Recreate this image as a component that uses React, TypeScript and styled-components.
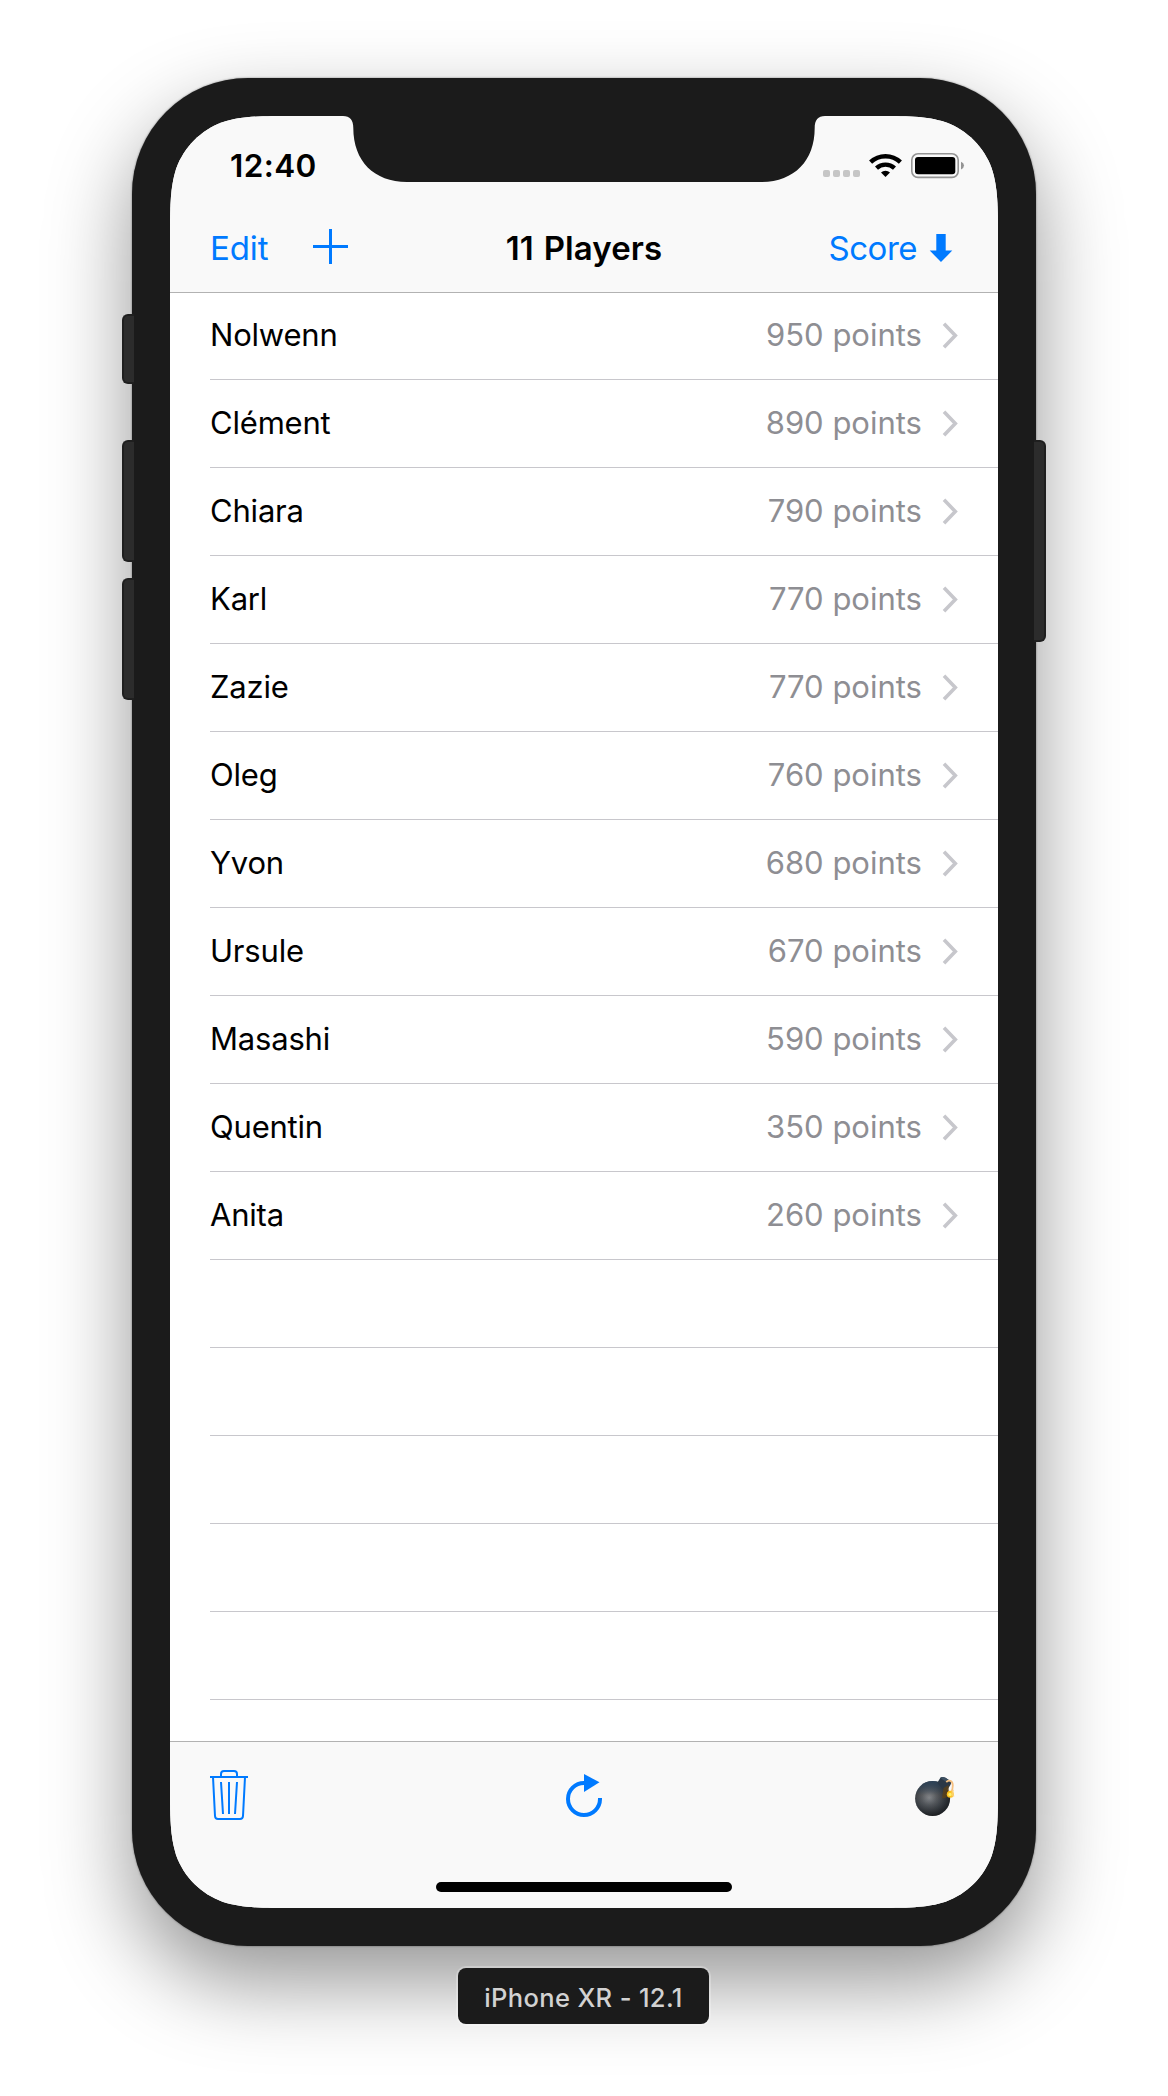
import React from "react";
import styled, { createGlobalStyle } from "styled-components";

const BLUE = "#007aff";

const GlobalStyle = createGlobalStyle`
  * { box-sizing: border-box; }
  html, body { margin: 0; background: #fff; }
  body { font-family: Inter, "Liberation Sans", sans-serif; }
`;

/* Continuous-curvature rounded rectangle, as used by the display mask. */
const smoothRect = (w: number, h: number, r: number) => {
  const a = 1.52866483 * r;
  const b = 1.08849296 * r;
  const c = 0.86840694 * r;
  const d = 0.63149379 * r;
  const e = 0.37282383 * r;
  const f = 0.16905956 * r;
  const g = 0.07491139 * r;
  return (
    `M${a} 0 L${w - a} 0 C${w - b} 0 ${w - c} 0 ${w - d} ${g} C${w - e} ${f} ${w - f} ${e} ${w - g} ${d} C${w} ${c} ${w} ${b} ${w} ${a} ` +
    `L${w} ${h - a} C${w} ${h - b} ${w} ${h - c} ${w - g} ${h - d} C${w - f} ${h - e} ${w - e} ${h - f} ${w - d} ${h - g} C${w - c} ${h} ${w - b} ${h} ${w - a} ${h} ` +
    `L${a} ${h} C${b} ${h} ${c} ${h} ${d} ${h - g} C${e} ${h - f} ${f} ${h - e} ${g} ${h - d} C0 ${h - c} 0 ${h - b} 0 ${h - a} ` +
    `L0 ${a} C0 ${b} 0 ${c} ${g} ${d} C${f} ${e} ${e} ${f} ${d} ${g} C${c} 0 ${b} 0 ${a} 0 Z`
  );
};

const Desktop = styled.main`
  display: flex;
  flex-direction: column;
  align-items: center;
  gap: 22px;
  height: 2096px;
  padding-top: 78px;
  overflow: hidden;
  background: #fff;
`;

const Device = styled.div`
  position: relative;
  flex: none;
  width: 904px;
  height: 1868px;
  padding: 38px;
  border-radius: 116px;
  background: #1b1b1b;
  box-shadow: 0 0 2px rgba(0, 0, 0, 0.5), 0 36px 84px rgba(0, 0, 0, 0.42);
`;

const SideButton = styled.span<{ $side: "left" | "right"; $top: number; $height: number }>`
  position: absolute;
  ${(p) => p.$side}: -10px;
  top: ${(p) => p.$top}px;
  width: 12px;
  height: ${(p) => p.$height}px;
  background: #2c2c2c;
  border: 2px solid #1f1f1f;
  border-${(p) => (p.$side === "left" ? "right" : "left")}-width: 0;
  border-radius: ${(p) => (p.$side === "left" ? "6px 0 0 6px" : "0 6px 6px 0")};
`;

const Screen = styled.div`
  position: relative;
  display: flex;
  flex-direction: column;
  width: 828px;
  height: 1792px;
  background: #fff;
  clip-path: path("${smoothRect(828, 1792, 83)}");
`;

const Notch = styled.svg`
  position: absolute;
  top: 0;
  left: 173px;
`;

const Header = styled.header`
  flex: none;
  height: 177px;
  background: #f9f9f9;
  border-bottom: 1px solid #b2b2b2;
`;

const StatusBar = styled.div`
  display: flex;
  justify-content: space-between;
  height: 88px;
  padding: 37px 33px 0 60px;
`;

const Clock = styled.time`
  margin-top: -6px;
  line-height: 37px;
  font-size: 31.5px;
  font-weight: 600;
  letter-spacing: 0.4px;
`;

const StatusIcons = styled.div`
  display: flex;
  align-items: flex-start;
`;

const NavBar = styled.nav`
  display: grid;
  grid-template-columns: 1fr auto 1fr;
  align-items: center;
  height: 88px;
  padding: 0 40px;
  font-size: 33px;
`;

const NavGroup = styled.div<{ $end?: boolean }>`
  display: flex;
  align-items: center;
  justify-content: ${(p) => (p.$end ? "flex-end" : "flex-start")};
  gap: ${(p) => (p.$end ? 12 : 44.5)}px;
  padding-right: ${(p) => (p.$end ? 5 : 0)}px;
`;

const BarButton = styled.button<{ $tracking?: number }>`
  display: flex;
  padding: 0;
  border: 0;
  background: none;
  color: ${BLUE};
  font: inherit;
  line-height: 44px;
  letter-spacing: ${(p) => p.$tracking ?? 0}px;
`;

const AddButton = styled(BarButton)`
  padding-bottom: 3px;
`;

const Title = styled.h1`
  margin: 0;
  font-size: 33px;
  font-weight: 600;
  line-height: 44px;
  letter-spacing: 0.1px;
  word-spacing: 1.5px;
`;

const List = styled.ul`
  flex: 1;
  margin: -1px 0 0;
  padding: 0 0 0 40px;
  list-style: none;
  overflow: hidden;
`;

const Row = styled.li`
  display: flex;
  align-items: center;
  height: 88px;
  padding: 0 39px 1px 0;
  border-bottom: 1px solid #c8c7cc;
  font-size: 31px;
  line-height: 44px;
`;

const Name = styled.span`
  flex: 1;
  color: #000;
  letter-spacing: -0.2px;
`;

const Points = styled.span`
  margin-right: 20px;
  color: #8e8e93;
`;

const Toolbar = styled.footer`
  flex: none;
  display: flex;
  flex-direction: column;
  justify-content: space-between;
  align-items: center;
  height: 167px;
  padding: 28px 40px 16px;
  background: #f9f9f9;
  border-top: 1px solid #b2b2b2;
`;

const Tools = styled.div`
  display: grid;
  grid-template-columns: 1fr auto 1fr;
  width: 100%;

  button:last-child {
    justify-content: flex-end;
    padding-right: 2px;
  }
`;

const HomeIndicator = styled.div`
  width: 296px;
  height: 10px;
  border-radius: 5px;
  background: #000;
`;

const DeviceLabel = styled.div`
  position: relative;
  width: 251px;
  height: 56px;
  margin-right: 1px;
  border-radius: 8px;
  background: #1b1b1b;
  box-shadow: 0 0 0 2px rgba(255, 255, 255, 0.25);
  color: #d2d2d2;
  font-size: 25.5px;
  font-weight: 500;
  letter-spacing: 0.35px;
  line-height: 59px;
  text-align: center;
`;

const players: [string, number][] = [
  ["Nolwenn", 950],
  ["Clément", 890],
  ["Chiara", 790],
  ["Karl", 770],
  ["Zazie", 770],
  ["Oleg", 760],
  ["Yvon", 680],
  ["Ursule", 670],
  ["Masashi", 590],
  ["Quentin", 350],
  ["Anita", 260],
];

const StatusGlyphs = () => (
  <svg width="142" height="26" viewBox="823 153 142 26">
    {[823, 833, 843, 853].map((x) => (
      <rect key={x} x={x} y="170" width="7" height="7" rx="2" fill="#c6c6c6" />
    ))}
    <g fill="none" stroke="#000" strokeWidth="4.4">
      <path d="M870.6 162.2 A21.5 21.5 0 0 1 900.4 162.2" />
      <path d="M876.5 168.2 A13.2 13.2 0 0 1 894.5 168.2" />
    </g>
    <path d="M885.5 177 L881 172.4 A6.6 6.6 0 0 1 890 172.4 Z" />
    <rect x="911.8" y="153.8" width="46.4" height="23.6" rx="6.2" fill="none" stroke="#949494" strokeWidth="1.6" />
    <rect x="915" y="157" width="40.3" height="17.2" rx="3" />
    <path d="M961 161.8 Q964 163 964 165.6 Q964 168.2 961 169.4 Z" fill="#949494" />
  </svg>
);

const PlusIcon = () => (
  <svg width="35" height="35" viewBox="0 0 35 35" fill={BLUE}>
    <rect x="16" width="3" height="35" />
    <rect y="16" width="35" height="3" />
  </svg>
);

const ArrowDown = () => (
  <svg width="24" height="44" viewBox="0 0 24 44" fill={BLUE}>
    <path d="M7.3 8 H16.7 V24.6 H23.3 L12 36 L0.7 24.6 H7.3 Z" />
  </svg>
);

const Chevron = () => (
  <svg width="17" height="27" viewBox="0 0 17 27" fill="none" stroke="#c7c7cc" strokeWidth="3.6">
    <path d="M2 1.8 L13.3 13.5 L2 25.2" />
  </svg>
);

const TrashIcon = () => (
  <svg width="38" height="50" viewBox="0 0 38 50" fill="none" stroke={BLUE} strokeWidth="2">
    <path d="M0 7 H38" />
    <path d="M11 7 V4 Q11 1 14 1 H24 Q27 1 27 4 V7" />
    <path d="M3 7 L5 46 Q5.2 49 8 49 H30 Q32.8 49 33 46 L35 7" />
    <path d="M19 12 V44 M11 12 L13 44 M27 12 L25 44" />
  </svg>
);

const RefreshIcon = () => (
  <svg width="36" height="50" viewBox="566 1770 36 50">
    <path d="M600 1798 V1799 A16 16 0 1 1 584 1783" fill="none" stroke={BLUE} strokeWidth="4" />
    <path d="M584 1774 L599.5 1782.3 L584 1792 Z" fill={BLUE} />
  </svg>
);

const BombIcon = () => (
  <svg width="42" height="50" viewBox="914 1770 42 50">
    <defs>
      <radialGradient id="shell" cx="0.4" cy="0.48" r="0.6">
        <stop offset="0" stopColor="#85878a" />
        <stop offset="0.35" stopColor="#5a5c5f" />
        <stop offset="0.75" stopColor="#33363a" />
        <stop offset="1" stopColor="#1f2124" />
      </radialGradient>
      <linearGradient id="sheen" x1="0" y1="0" x2="0" y2="1">
        <stop offset="0" stopColor="#2b4763" stopOpacity="0.75" />
        <stop offset="0.4" stopColor="#2b4763" stopOpacity="0" />
        <stop offset="1" stopColor="#000" stopOpacity="0.3" />
      </linearGradient>
    </defs>
    <circle cx="932.6" cy="1798.5" r="17.5" fill="url(#shell)" />
    <circle cx="932.6" cy="1798.5" r="17.5" fill="url(#sheen)" />
    <path d="M937.4 1782.4 L940.4 1777.8 Q942 1776 945.5 1777.8 L950.8 1781.3 Q951.8 1782.6 950.5 1784.8 L947 1790.6 Q940.8 1788.5 937.4 1782.4 Z" fill="#2b3846" />
    <path d="M940.4 1777.8 Q942 1776 945.5 1777.8 L950.6 1781.3 Q947 1783.4 940.4 1777.8 Z" fill="#3e5062" />
    <path d="M943.5 1788 L948.4 1785 L949.4 1792.5 L946.4 1797.5 L942 1798.5 Z" fill="#654310" opacity="0.65" />
    <path d="M946.3 1782.2 C948.5 1779.6 952.8 1780.4 952.8 1785.5 C952.8 1788.7 952.3 1790.4 951 1793" fill="none" stroke="#f5bf80" strokeWidth="1.8" />
    <circle cx="950.3" cy="1794.2" r="3.5" fill="#fcc01c" />
    <circle cx="950" cy="1794.4" r="1.7" fill="#fff36a" />
    <path d="M951.5 1790.6 L954 1789.8 L953.4 1793 L954.4 1796.4 L951.6 1796.4 Z" fill="#fbd27a" opacity="0.8" />
  </svg>
);

export default function App() {
  return (
    <>
      <GlobalStyle />
      <Desktop>
        <Device>
          <SideButton $side="left" $top={236} $height={70} />
          <SideButton $side="left" $top={362} $height={122} />
          <SideButton $side="left" $top={500} $height={122} />
          <SideButton $side="right" $top={362} $height={202} />
          <Screen>
            <Header>
              <StatusBar>
                <Clock>12:40</Clock>
                <StatusIcons>
                  <StatusGlyphs />
                </StatusIcons>
              </StatusBar>
              <NavBar>
                <NavGroup>
                  <BarButton $tracking={-0.1}>Edit</BarButton>
                  <AddButton aria-label="Add player">
                    <PlusIcon />
                  </AddButton>
                </NavGroup>
                <Title>11 Players</Title>
                <NavGroup $end>
                  <BarButton $tracking={-0.5}>Score</BarButton>
                  <ArrowDown />
                </NavGroup>
              </NavBar>
            </Header>
            <List>
              {players.map(([name, points]) => (
                <Row key={name}>
                  <Name>{name}</Name>
                  <Points>{points} points</Points>
                  <Chevron />
                </Row>
              ))}
              {Array.from({ length: 5 }, (_, i) => (
                <Row key={i} />
              ))}
            </List>
            <Toolbar>
              <Tools>
                <BarButton aria-label="Delete">
                  <TrashIcon />
                </BarButton>
                <BarButton aria-label="Refresh">
                  <RefreshIcon />
                </BarButton>
                <BarButton aria-label="Bomb">
                  <BombIcon />
                </BarButton>
              </Tools>
              <HomeIndicator />
            </Toolbar>
            <Notch width="482" height="67" viewBox="0 0 482 67" fill="#1b1b1b">
              <path d="M0 0 C7 0 10.3 4 10.3 12 C10.3 45 31 66 64 66 H418 C451 66 471.7 45 471.7 12 C471.7 4 475 0 482 0 Z" />
            </Notch>
          </Screen>
        </Device>
        <DeviceLabel>iPhone XR - 12.1</DeviceLabel>
      </Desktop>
    </>
  );
}
